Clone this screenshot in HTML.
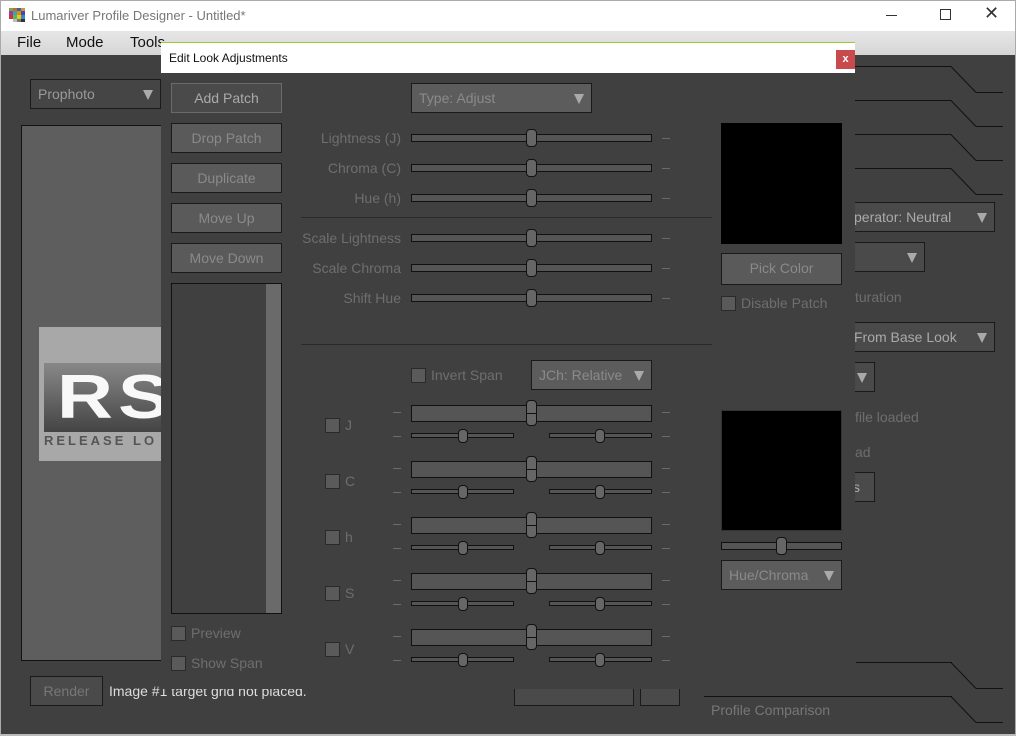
<!DOCTYPE html>
<html><head><meta charset="utf-8"><style>
*{box-sizing:border-box;margin:0;padding:0}
body{width:1016px;height:736px;overflow:hidden;background:#404040;font-family:"Liberation Sans","DejaVu Sans",sans-serif;position:relative}
.a{position:absolute}
.t{position:absolute;font-size:14px;color:#6e6e6e;white-space:nowrap;line-height:16px}
.btn{position:absolute;border:1px solid #1a1a1a;background:#5a5a5a;color:#8a8a8a;font-size:14px;text-align:center;line-height:28px}
.dd{position:absolute;border:1px solid #1a1a1a;background:#5c5c5c;color:#8a8a8a;font-size:14px;line-height:28px;padding-left:7px;white-space:nowrap;overflow:hidden}
.dd:after{content:"";position:absolute;right:7px;top:10px;border-left:5px solid transparent;border-right:5px solid transparent;border-top:10px solid #aaa}
.cb{position:absolute;width:15px;height:15px;border:1px solid #2a2a2a;background:#5a5a5a}
.tr{position:absolute;border:1px solid #111;background:#555}
.th{position:absolute;border:1px solid #111;background:#666;border-radius:4px}
.dash{position:absolute;width:8px;height:1px;background:#6a6a6a}
.ln{position:absolute;height:1px;background:#111}
</style></head><body>
<div class="a" style="left:0;top:0;width:1016px;height:31px;background:#fff;border:1px solid #aaa;border-bottom:none"></div>
<svg class="a" style="left:9px;top:8px" width="16" height="14"><g>
<rect x="0" y="0" width="4" height="3" fill="#7a4"/><rect x="4" y="0" width="4" height="3" fill="#c63"/><rect x="8" y="0" width="4" height="3" fill="#36a"/><rect x="12" y="0" width="4" height="3" fill="#c93"/>
<rect x="0" y="3" width="4" height="4" fill="#a3a"/><rect x="4" y="3" width="4" height="4" fill="#3aa"/><rect x="8" y="3" width="4" height="4" fill="#e80"/><rect x="12" y="3" width="4" height="4" fill="#44b"/>
<rect x="0" y="7" width="4" height="4" fill="#c33"/><rect x="4" y="7" width="4" height="4" fill="#5b5"/><rect x="8" y="7" width="4" height="4" fill="#dc2"/><rect x="12" y="7" width="4" height="4" fill="#38c"/>
<rect x="0" y="11" width="4" height="3" fill="#fff"/><rect x="4" y="11" width="4" height="3" fill="#bbb"/><rect x="8" y="11" width="4" height="3" fill="#777"/><rect x="12" y="11" width="4" height="3" fill="#333"/></g></svg>
<div class="t" style="left:31px;top:8px;color:#777;font-size:13px">Lumariver Profile Designer - Untitled*</div>
<div class="a" style="left:886px;top:15px;width:11px;height:1px;background:#333"></div>
<div class="a" style="left:940px;top:9px;width:11px;height:11px;border:1px solid #333"></div>
<div class="t" style="left:984px;top:5px;color:#333;font-size:18px">✕</div>
<div class="a" style="left:1px;top:31px;width:1014px;height:24px;background:linear-gradient(#e6e6e6,#d6d6d6)"></div>
<div class="t" style="left:17px;top:35px;color:#111;font-size:15px">File</div>
<div class="t" style="left:66px;top:35px;color:#111;font-size:15px">Mode</div>
<div class="t" style="left:130px;top:35px;color:#111;font-size:15px">Tools</div>
<div class="a" style="left:0;top:31px;width:1px;height:705px;background:#aaa"></div>
<div class="a" style="left:1015px;top:31px;width:1px;height:705px;background:#aaa"></div>
<div class="a" style="left:0;top:734px;width:1016px;height:2px;background:#bbb"></div>
<div class="dd" style="left:30px;top:79px;width:131px;height:30px;background:#454545;color:#9a9a9a">Prophoto</div>
<div class="a" style="left:21px;top:125px;width:145px;height:536px;background:#5e5e5e;border:1px solid #111"></div>
<div class="a" style="left:39px;top:327px;width:125px;height:134px;background:#a8a8a8"></div>
<div class="a" style="left:44px;top:363px;width:120px;height:69px;background:linear-gradient(#888,#444)"></div>
<div class="t" style="left:57px;top:368px;color:#f8f8f8;font-size:62px;line-height:60px;font-weight:bold;letter-spacing:4px;transform:scaleX(1.25);transform-origin:left">RS</div>
<div class="t" style="left:44px;top:433px;color:#555;font-size:13px;font-weight:bold;letter-spacing:3px">RELEASE LO</div>
<div class="btn" style="left:30px;top:676px;width:73px;height:30px;background:#4a4a4a;color:#777">Render</div>
<div class="t" style="left:109px;top:683px;color:#ddd">Image #1 target grid not placed.</div>
<div class="ln" style="left:855px;top:66px;width:96px"></div><div class="ln" style="left:976px;top:92px;width:27px"></div>
<div class="ln" style="left:855px;top:100px;width:96px"></div><div class="ln" style="left:976px;top:126px;width:27px"></div>
<div class="ln" style="left:855px;top:134px;width:96px"></div><div class="ln" style="left:976px;top:160px;width:27px"></div>
<div class="ln" style="left:855px;top:168px;width:96px"></div><div class="ln" style="left:976px;top:194px;width:27px"></div>
<svg class="a" style="left:945px;top:60px" width="40" height="140"><g stroke="#111" fill="none"><path d="M6 6.5L31 32.5M6 40.5L31 66.5M6 74.5L31 100.5M6 108.5L31 134.5"/></g></svg>
<div class="dd" style="left:840px;top:202px;width:155px;height:30px;background:#4a4a4a;color:#aaa;padding-left:13px">perator: Neutral</div>
<div class="dd" style="left:840px;top:242px;width:85px;height:30px;background:#4a4a4a"></div>
<div class="t" style="left:855px;top:289px">turation</div>
<div class="dd" style="left:840px;top:322px;width:155px;height:30px;background:#4a4a4a;color:#aaa;padding-left:13px">From Base Look</div>
<div class="dd" style="left:840px;top:362px;width:35px;height:30px;background:#4a4a4a"></div>
<div class="t" style="left:855px;top:409px">file loaded</div>
<div class="t" style="left:855px;top:444px">ad</div>
<div class="btn" style="left:840px;top:472px;width:35px;height:30px;background:#4a4a4a;color:#aaa;text-align:right;padding-right:14px">s</div>
<div class="ln" style="left:856px;top:662px;width:96px"></div><div class="ln" style="left:976px;top:688px;width:27px"></div>
<div class="ln" style="left:704px;top:696px;width:248px"></div><div class="ln" style="left:976px;top:722px;width:27px"></div>
<svg class="a" style="left:945px;top:656px" width="40" height="72"><g stroke="#111" fill="none"><path d="M6 6.5L31 32.5M6 40.5L31 66.5"/></g></svg>
<div class="t" style="left:711px;top:702px;color:#777">Profile Comparison</div>
<div class="btn" style="left:514px;top:676px;width:120px;height:30px;background:#4a4a4a"></div>
<div class="btn" style="left:640px;top:676px;width:40px;height:30px;background:#4a4a4a"></div>
<div class="a" style="left:161px;top:72px;width:694px;height:617px;background:#404040"></div>
<div class="a" style="left:161px;top:42px;width:694px;height:31px;background:#fff;border-top:1px solid #9c3"></div>
<div class="t" style="left:169px;top:50px;color:#111;font-size:12px">Edit Look Adjustments</div>
<div class="a" style="left:836px;top:50px;width:19px;height:19px;background:#c84a4d;color:#fff;font-size:11px;text-align:center;line-height:18px;font-weight:bold">x</div>
<div class="btn" style="left:171px;top:83px;width:111px;height:30px;background:#4a4a4a;color:#aaa;border-color:#6a6a6a">Add Patch</div>
<div class="btn" style="left:171px;top:123px;width:111px;height:30px">Drop Patch</div>
<div class="btn" style="left:171px;top:163px;width:111px;height:30px">Duplicate</div>
<div class="btn" style="left:171px;top:203px;width:111px;height:30px">Move Up</div>
<div class="btn" style="left:171px;top:243px;width:111px;height:30px">Move Down</div>
<div class="a" style="left:171px;top:283px;width:111px;height:331px;background:#404040;border:1px solid #111"></div>
<div class="a" style="left:266px;top:284px;width:15px;height:329px;background:#6a6a6a"></div>
<div class="cb" style="left:171px;top:626px"></div><div class="t" style="left:191px;top:625px">Preview</div>
<div class="cb" style="left:171px;top:656px"></div><div class="t" style="left:191px;top:655px">Show Span</div>
<div class="dd" style="left:411px;top:83px;width:181px;height:30px">Type: Adjust</div>
<div class="t" style="left:300px;top:130px;width:101px;text-align:right">Lightness (J)</div>
<div class="t" style="left:300px;top:160px;width:101px;text-align:right">Chroma (C)</div>
<div class="t" style="left:300px;top:190px;width:101px;text-align:right">Hue (h)</div>
<div class="t" style="left:300px;top:230px;width:101px;text-align:right">Scale Lightness</div>
<div class="t" style="left:300px;top:260px;width:101px;text-align:right">Scale Chroma</div>
<div class="t" style="left:300px;top:290px;width:101px;text-align:right">Shift Hue</div>
<div class="a" style="left:301px;top:217px;width:411px;height:1px;background:#2a2a2a"></div>
<div class="a" style="left:301px;top:344px;width:411px;height:1px;background:#2a2a2a"></div>
<div class="cb" style="left:411px;top:368px"></div><div class="t" style="left:431px;top:367px">Invert Span</div>
<div class="dd" style="left:531px;top:360px;width:121px;height:30px">JCh: Relative</div>
<div class="cb" style="left:325px;top:418px"></div><div class="t" style="left:345px;top:417px">J</div>
<div class="cb" style="left:325px;top:474px"></div><div class="t" style="left:345px;top:473px">C</div>
<div class="cb" style="left:325px;top:530px"></div><div class="t" style="left:345px;top:529px">h</div>
<div class="cb" style="left:325px;top:586px"></div><div class="t" style="left:345px;top:585px">S</div>
<div class="cb" style="left:325px;top:642px"></div><div class="t" style="left:345px;top:641px">V</div>
<div class="a" style="left:721px;top:123px;width:121px;height:121px;background:#000"></div>
<div class="btn" style="left:721px;top:253px;width:121px;height:32px">Pick Color</div>
<div class="cb" style="left:721px;top:296px"></div><div class="t" style="left:741px;top:295px">Disable Patch</div>
<div class="a" style="left:721px;top:410px;width:121px;height:121px;background:#000;border:1px solid #333"></div>
<div class="tr" style="left:721px;top:542px;width:121px;height:8px"></div>
<div class="th" style="left:776px;top:537px;width:11px;height:18px"></div>
<div class="dd" style="left:721px;top:560px;width:121px;height:30px">Hue/Chroma</div>
<div id="s"></div>
<script>
var h='';
function tr(x,y,w,hh){h+='<div class="tr" style="left:'+x+'px;top:'+y+'px;width:'+w+'px;height:'+hh+'px"></div>';}
function th(x,y,w,hh){h+='<div class="th" style="left:'+x+'px;top:'+y+'px;width:'+w+'px;height:'+hh+'px"></div>';}
function d(x,y){h+='<div class="dash" style="left:'+x+'px;top:'+y+'px"></div>';}
[138,168,198,238,268,298].forEach(function(y){tr(411,y-4,241,8);th(526,y-9,11,18);d(662,y);});
[412,468,524,580,636].forEach(function(y){
 tr(411,y-7,241,17);th(526,y-12,11,26);h+='<div class="a" style="left:527px;top:'+(y+1)+'px;width:9px;height:1px;background:#111"></div>';
 d(393,y);d(662,y);
 tr(411,y+21,103,5);th(458,y+17,10,14);tr(549,y+21,103,5);th(595,y+17,10,14);d(393,y+24);d(662,y+24);
});
document.getElementById('s').innerHTML=h;
</script>
</body></html>
